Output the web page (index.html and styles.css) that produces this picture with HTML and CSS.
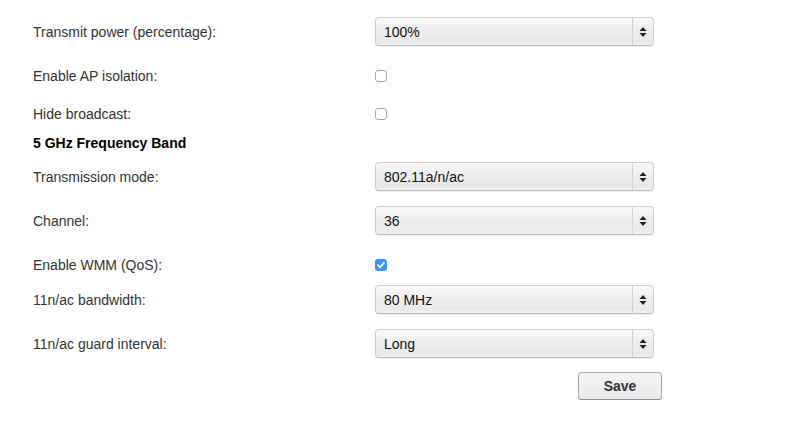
FILE: index.html
```html
<!DOCTYPE html>
<html>
<head>
<meta charset="utf-8">
<link rel="stylesheet" href="styles.css">
</head>
<body>
<form class="form">
  <div class="row row-select">
    <span class="lbl">Transmit power (percentage):</span>
    <div class="select"><span class="val">100%</span><span class="arrows"><svg width="8" height="12" viewBox="0 0 8 12"><path d="M4 1 L7.5 5 L0.5 5 Z M4 11 L7.5 7 L0.5 7 Z" fill="#222"/></svg></span></div>
  </div>
  <div class="row row-check">
    <span class="lbl">Enable AP isolation:</span>
    <span class="cb"></span>
  </div>
  <div class="row row-check">
    <span class="lbl">Hide broadcast:</span>
    <span class="cb"></span>
  </div>
  <div class="row row-heading">
    <span class="heading">5 GHz Frequency Band</span>
  </div>
  <div class="row row-select">
    <span class="lbl">Transmission mode:</span>
    <div class="select"><span class="val">802.11a/n/ac</span><span class="arrows"><svg width="8" height="12" viewBox="0 0 8 12"><path d="M4 1 L7.5 5 L0.5 5 Z M4 11 L7.5 7 L0.5 7 Z" fill="#222"/></svg></span></div>
  </div>
  <div class="row row-select">
    <span class="lbl">Channel:</span>
    <div class="select"><span class="val">36</span><span class="arrows"><svg width="8" height="12" viewBox="0 0 8 12"><path d="M4 1 L7.5 5 L0.5 5 Z M4 11 L7.5 7 L0.5 7 Z" fill="#222"/></svg></span></div>
  </div>
  <div class="row row-check">
    <span class="lbl">Enable WMM (QoS):</span>
    <span class="cb cb-on"><svg width="12" height="12" viewBox="0 0 12 12"><path d="M3 6.2 L5.1 8.4 L9 3.6" fill="none" stroke="#fff" stroke-width="1.7" stroke-linecap="round" stroke-linejoin="round"/></svg></span>
  </div>
  <div class="row row-select">
    <span class="lbl">11n/ac bandwidth:</span>
    <div class="select"><span class="val">80 MHz</span><span class="arrows"><svg width="8" height="12" viewBox="0 0 8 12"><path d="M4 1 L7.5 5 L0.5 5 Z M4 11 L7.5 7 L0.5 7 Z" fill="#222"/></svg></span></div>
  </div>
  <div class="row row-select">
    <span class="lbl">11n/ac guard interval:</span>
    <div class="select"><span class="val">Long</span><span class="arrows"><svg width="8" height="12" viewBox="0 0 8 12"><path d="M4 1 L7.5 5 L0.5 5 Z M4 11 L7.5 7 L0.5 7 Z" fill="#222"/></svg></span></div>
  </div>
  <div class="actions">
    <button type="button" class="btn">Save</button>
  </div>
</form>
</body>
</html>
```

FILE: styles.css
```css
html, body {
  margin: 0;
  padding: 0;
  background: #fff;
}
body {
  font-family: "Liberation Sans", Arial, Helvetica, sans-serif;
  font-size: 14px;
  color: #333;
}
.form {
  padding: 17px 0 0 33px;
  display: flex;
  flex-direction: column;
  width: 629px;
}
.row {
  display: flex;
  align-items: center;
}
.lbl {
  width: 342px;
  flex: none;
}
.row-select { height: 29px; }
.row-check { height: 20px; }
.row-heading { height: 18px; }

.row-select + .row-check { margin-top: 20px; }
.row-check + .row-check { margin-top: 18px; }
.row-check + .row-heading { margin-top: 10px; }
.row-heading + .row-select { margin-top: 10px; }
.row-select + .row-select { margin-top: 15px; }
.row-check + .row-select { margin-top: 10px; }

.heading {
  font-weight: bold;
  color: #000;
}
.select {
  position: relative;
  box-sizing: border-box;
  width: 279px;
  height: 29px;
  border: 1px solid #cfcfcf;
  border-bottom-color: #bdbdbd;
  border-radius: 4px;
  background: linear-gradient(#f9f9f9 0%, #efefef 45%, #e9e9e9 85%, #f2f2f2 100%);
  box-shadow: 0 1px 1px rgba(0,0,0,0.06);
  display: flex;
  align-items: center;
  color: #111;
}
.val {
  flex: 1;
  padding-left: 8px;
}
.arrows {
  width: 20px;
  align-self: stretch;
  border-left: 1px solid #d2d2d2;
  display: flex;
  align-items: center;
  justify-content: center;
}
.cb {
  box-sizing: border-box;
  width: 12px;
  height: 12px;
  border: 1px solid #a8a8a8;
  border-radius: 3px;
  background: #fff;
  display: flex;
  align-items: center;
  justify-content: center;
}
.cb-on {
  border: none;
  background: #3b92f5;
}
.cb svg { display: block; }
.actions {
  margin-top: 14px;
  display: flex;
  justify-content: flex-end;
}
.btn {
  box-sizing: border-box;
  width: 84px;
  height: 28px;
  border: 1px solid #a9a9a9;
  border-bottom-color: #8a8a8a;
  border-radius: 4px;
  background: linear-gradient(#f4f4f4, #e9e9e9);
  box-shadow: 0 1px 1px rgba(0,0,0,0.12);
  font-family: "Liberation Sans", Arial, Helvetica, sans-serif;
  font-size: 14px;
  font-weight: bold;
  color: #333;
  padding: 0;
}
```
